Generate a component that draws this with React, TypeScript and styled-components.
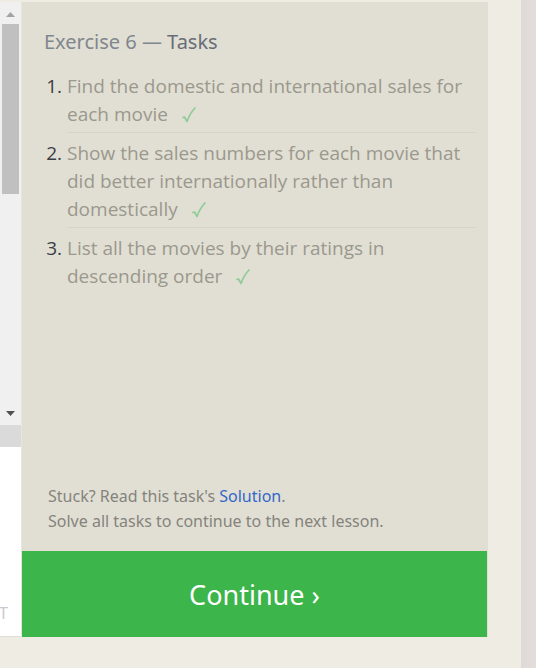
import React from "react";
import styled, { createGlobalStyle } from "styled-components";

const GlobalStyle = createGlobalStyle`
  *, *::before, *::after { box-sizing: border-box; }
  body {
    margin: 0;
    background: #e3dedb;
    font-family: "Noto Sans", "Open Sans", sans-serif;
    font-weight: 400;
  }
`;

const Page = styled.div`
  display: flex;
  min-height: 100vh;
  padding-right: 15px;
  background: linear-gradient(to right, #dfdad7, #e3dedb) right / 15px 100% no-repeat;
`;

const Paper = styled.main`
  display: flex;
  flex: 1;
  min-width: 0;
  padding: 2px 33px 31px 0;
  background: #efece3;
`;

const TableEdge = styled.aside`
  display: flex;
  flex-direction: column;
  flex: none;
  width: 21px;
  border-bottom: 1px solid #e0ded8;
  background: #ffffff;
`;

const Scrollbar = styled.div`
  display: flex;
  flex-direction: column;
  height: 423px;
  padding: 0 2px;
  background: #f0f0f0;
`;

const ScrollButton = styled.button<{ $tone: string }>`
  display: flex;
  align-items: center;
  justify-content: center;
  width: 100%;
  height: 22px;
  padding: 2px 0 0;
  border: 0;
  background: none;
  color: ${(p) => p.$tone};

  &:last-child { padding: 0 0 2px; }
`;

const Track = styled.div`
  flex: 1;
`;

const Thumb = styled.div`
  height: 170px;
  background: #c0c0c0;
`;

const Corner = styled.div`
  height: 22px;
  background: #dadada;
`;

const Editor = styled.div`
  display: flex;
  flex: 1;
  align-items: flex-end;
  justify-content: flex-end;
  padding: 0 13px 10px 0;
  overflow: hidden;
  color: #c9cad0;
  font-size: 16px;
  line-height: 25px;
`;

const Panel = styled.section`
  display: flex;
  flex: 1;
  flex-direction: column;
  min-width: 0;
  border-left: 1px solid #e8e6dc;
  background: #e1dfd3;
`;

const Title = styled.h2`
  margin: 26px 22px 16px;
  color: #80868e;
  font-size: 20px;
  font-weight: 400;
  line-height: 28px;
`;

const TitleStrong = styled.span`
  color: #686d78;
`;

const TaskList = styled.ol`
  margin: 0 12px 0 45px;
  padding: 0;
  font-family: "Open Sans", "Noto Sans", sans-serif;
  font-size: 19px;
  line-height: 28px;
`;

const TaskItem = styled.li`
  padding: 0 0 4px;
  color: #9b988e;

  &::marker { color: #3a3d45; }
  & + & { padding-top: 6px; border-top: 1px solid #d6d4c9; }
`;

const Check = styled.svg`
  margin-left: 14px;
  vertical-align: -3px;
`;

const Help = styled.p`
  margin: auto 26px 17px;
  color: #85837d;
  font-size: 16px;
  line-height: 25px;
`;

const SolutionLink = styled.a`
  color: #3268c8;
  text-decoration: none;
`;

const ContinueButton = styled.button`
  height: 86px;
  margin-right: 1px;
  padding: 2px 0 0;
  border: 0;
  background: #3cb54a;
  color: #ffffff;
  font: 400 27px/40px "Noto Sans", "Open Sans", sans-serif;
  cursor: pointer;
`;

const tasks = [
  "Find the domestic and international sales for each movie",
  "Show the sales numbers for each movie that did better internationally rather than domestically",
  "List all the movies by their ratings in descending order",
];

function Arrow({ down = false }: { down?: boolean }) {
  return (
    <svg width="9" height="5" viewBox="0 0 9 5" aria-hidden="true">
      <path d={down ? "M0 0H9L4.5 5Z" : "M0 5H9L4.5 0Z"} fill="currentColor" />
    </svg>
  );
}

export default function App() {
  return (
    <>
      <GlobalStyle />
      <Page>
        <Paper>
          <TableEdge>
            <Scrollbar>
              <ScrollButton $tone="#a3a3a3" aria-label="Scroll up"><Arrow /></ScrollButton>
              <Track><Thumb /></Track>
              <ScrollButton $tone="#505050" aria-label="Scroll down"><Arrow down /></ScrollButton>
            </Scrollbar>
            <Corner />
            <Editor>T</Editor>
          </TableEdge>
          <Panel>
            <Title>Exercise 6 — <TitleStrong>Tasks</TitleStrong></Title>
            <TaskList>
              {tasks.map((task) => (
                <TaskItem key={task}>
                  {task}
                  <Check width="14" height="17" viewBox="0 0 14 17" role="img" aria-label="Completed">
                    <path d="M1 10.5L2.5 10L5 14.5Q8 6 13 1" fill="none" stroke="#8fcb98" strokeWidth="1.7" strokeLinecap="round" strokeLinejoin="round" />
                  </Check>
                </TaskItem>
              ))}
            </TaskList>
            <Help>
              Stuck? Read this task's <SolutionLink href="#solution">Solution</SolutionLink>.
              <br />
              Solve all tasks to continue to the next lesson.
            </Help>
            <ContinueButton type="button">Continue ›</ContinueButton>
          </Panel>
        </Paper>
      </Page>
    </>
  );
}
